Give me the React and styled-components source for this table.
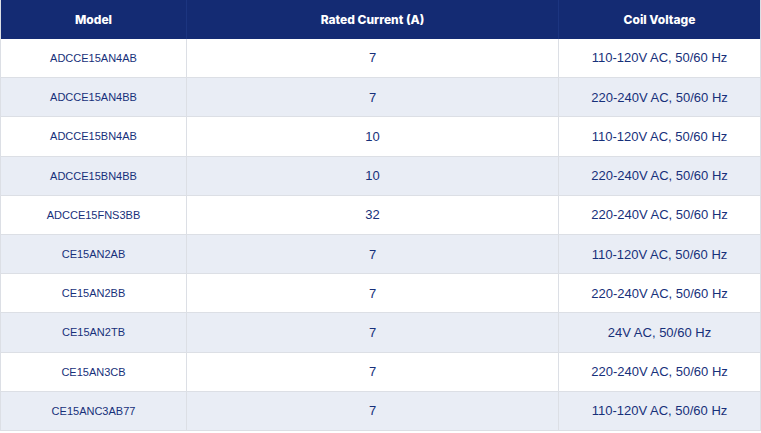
import React from "react";
import styled, { createGlobalStyle } from "styled-components";

const GlobalStyle = createGlobalStyle`
  html, body {
    margin: 0;
    padding: 0;
    background: #fff;
  }
`;

const Table = styled.table`
  width: 761px;
  border-collapse: collapse;
  table-layout: fixed;
  font-family: "Liberation Sans", Arial, sans-serif;
  color: #17307a;
  border: 1px solid #dcdfe5;
  border-top: none;
`;

const HeadRow = styled.tr`
  height: 38.5px;
`;

const HeadCell = styled.th`
  background: #142b73;
  color: #fff;
  font-family: Inter, "Noto Sans", sans-serif;
  font-weight: 800;
  font-size: 12px;
  letter-spacing: 0;
  padding: 0;
  text-align: center;
  border-right: 1px solid #1c3580;
  &:last-child {
    border-right: none;
  }
`;

const Row = styled.tr`
  height: 39.2px;
  background: ${(p) => (p.$striped ? "#e9edf5" : "#fff")};
`;

const Cell = styled.td`
  padding: 0;
  text-align: center;
  font-size: ${(p) => (p.$small ? "11px" : "13px")};
  border: 1px solid #dcdfe5;
  border-top: none;
`;

const rows = [
  ["ADCCE15AN4AB", "7", "110-120V AC, 50/60 Hz"],
  ["ADCCE15AN4BB", "7", "220-240V AC, 50/60 Hz"],
  ["ADCCE15BN4AB", "10", "110-120V AC, 50/60 Hz"],
  ["ADCCE15BN4BB", "10", "220-240V AC, 50/60 Hz"],
  ["ADCCE15FNS3BB", "32", "220-240V AC, 50/60 Hz"],
  ["CE15AN2AB", "7", "110-120V AC, 50/60 Hz"],
  ["CE15AN2BB", "7", "220-240V AC, 50/60 Hz"],
  ["CE15AN2TB", "7", "24V AC, 50/60 Hz"],
  ["CE15AN3CB", "7", "220-240V AC, 50/60 Hz"],
  ["CE15ANC3AB77", "7", "110-120V AC, 50/60 Hz"],
];

const App = () => {
  return (
    <>
      <GlobalStyle />
      <Table>
        <colgroup>
          <col style={{ width: 186 }} />
          <col style={{ width: 372 }} />
          <col />
        </colgroup>
        <thead>
          <HeadRow>
            <HeadCell>Model</HeadCell>
            <HeadCell>Rated Current (A)</HeadCell>
            <HeadCell>Coil Voltage</HeadCell>
          </HeadRow>
        </thead>
        <tbody>
          {rows.map((r, i) => (
            <Row key={r[0]} $striped={i % 2 === 1}>
              <Cell $small>{r[0]}</Cell>
              <Cell>{r[1]}</Cell>
              <Cell>{r[2]}</Cell>
            </Row>
          ))}
        </tbody>
      </Table>
    </>
  );
};

export default App;
